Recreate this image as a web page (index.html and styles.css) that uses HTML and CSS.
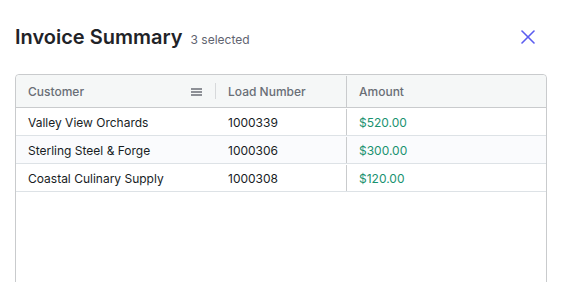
FILE: index.html
```html
<!DOCTYPE html>
<html lang="en">
<head>
  <meta charset="UTF-8" />
  <title>Invoice Summary</title>
  <link rel="stylesheet" href="styles.css">
</head>
<body>
  <div class="dialog">
    <div class="dialog-head">
      <h1 class="dialog-title">Invoice Summary</h1>
      <span class="dialog-count">3 selected</span>
      <button class="close-btn" title="Close">
        <svg width="14" height="14" viewBox="0 0 14 14" fill="none" stroke="currentColor" stroke-width="1.6" stroke-linecap="round">
          <line x1="1" y1="1" x2="13" y2="13"></line>
          <line x1="13" y1="1" x2="1" y2="13"></line>
        </svg>
      </button>
    </div>

    <div class="grid">
      <div class="grid-header">
        <div class="hcell col-customer">
          <span>Customer</span>
          <span class="menu-icon"><i></i><i></i><i></i></span>
          <span class="resize"></span>
        </div>
        <div class="hcell col-load"><span>Load Number</span></div>
        <div class="hcell col-amount"><span>Amount</span></div>
      </div>
      <div class="grid-row">
        <div class="cell col-customer">Valley View Orchards</div>
        <div class="cell col-load">1000339</div>
        <div class="cell col-amount money">$520.00</div>
      </div>
      <div class="grid-row odd">
        <div class="cell col-customer">Sterling Steel &amp; Forge</div>
        <div class="cell col-load">1000306</div>
        <div class="cell col-amount money">$300.00</div>
      </div>
      <div class="grid-row">
        <div class="cell col-customer">Coastal Culinary Supply</div>
        <div class="cell col-load">1000308</div>
        <div class="cell col-amount money">$120.00</div>
      </div>
    </div>
  </div>
</body>
</html>
```

FILE: styles.css
```css
* {
  margin: 0;
  padding: 0;
  box-sizing: border-box;
  font-family: Inter, 'Noto Sans', sans-serif;
}

body {
  background: #ffffff;
  color: #181d1f;
  overflow: hidden;
  height: 282px;
}

.dialog {
  padding: 0 19px 0 15px;
}

.dialog-head {
  display: flex;
  align-items: center;
  height: 34px;
  margin-top: 20px;
}

.dialog-title {
  font-size: 20px;
  font-weight: 600;
  color: #1f2328;
}

.dialog-count {
  font-size: 12px;
  color: #5f6470;
  margin-left: 8px;
  margin-top: 4px;
}

.close-btn {
  margin-left: auto;
  margin-right: 12px;
  border: none;
  background: none;
  color: #5b5cf0;
  display: flex;
  cursor: pointer;
}

.grid {
  margin-top: 20px;
  height: 240px;
  border: 1px solid #c9cbcd;
  border-radius: 4px 4px 0 0;
  font-size: 12px;
}

.grid-header {
  display: flex;
  height: 33px;
  padding-top: 1px;
  background: #f5f7f7;
  border-bottom: 1px solid #c9cbcd;
  border-radius: 4px 4px 0 0;
}

.grid-row {
  display: flex;
  height: 28px;
  padding-top: 1px;
  border-bottom: 1px solid #dde2e6;
}

.grid-row.odd {
  background: #fafbfd;
}

.col-customer {
  width: 200px;
}

.col-load {
  width: 130px;
}

.col-amount {
  flex: 1;
  border-left: 1px solid #c9cbcd;
}

.hcell,
.cell {
  display: flex;
  align-items: center;
  padding: 0 12px;
}

.hcell {
  position: relative;
  font-weight: 500;
  color: #696e76;
}

.cell {
  color: #181d1f;
}

.money {
  color: #1a9270;
}

.menu-icon {
  margin-left: auto;
  margin-right: 2px;
  display: flex;
  flex-direction: column;
  gap: 1px;
}

.menu-icon i {
  display: block;
  width: 11px;
  height: 2px;
  background: #8d9096;
}

.resize {
  position: absolute;
  right: 0;
  top: 7px;
  bottom: 8px;
  width: 1px;
  background: #d7d9db;
}
```
